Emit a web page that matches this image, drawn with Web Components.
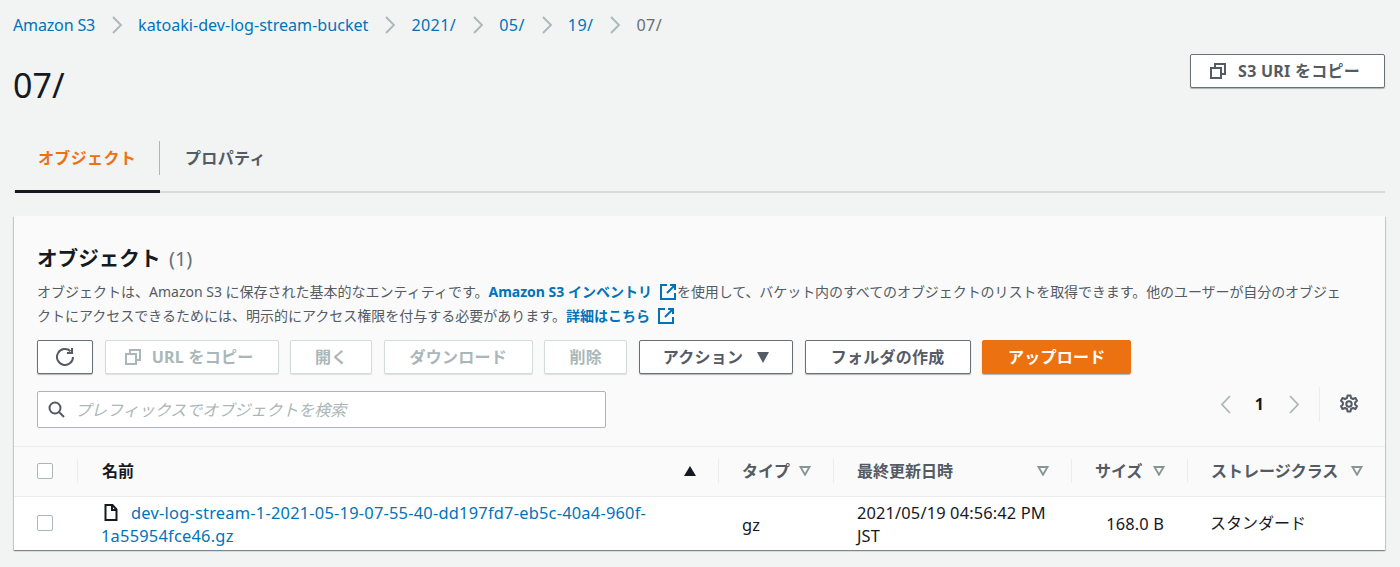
<!DOCTYPE html>
<html lang="ja"><head><meta charset="utf-8">
<style>
html,body{margin:0;padding:0;background:#f2f3f3;height:567px;overflow:hidden}
body{font-family:"Noto Sans","Noto Sans CJK JP",sans-serif;color:#16191f}
</style></head><body>
<s3-page></s3-page>
<script>
const FONT='"Noto Sans","Noto Sans CJK JP",sans-serif';
const copyIcon=`<svg width="16" height="16" viewBox="0 0 16 16" fill="none" stroke="currentColor" stroke-width="2"><rect x="1" y="5" width="10" height="10"/><path d="M5 4V1h10v10h-3"/></svg>`;
const extIcon=`<svg width="16" height="17" viewBox="0 0 16 17" fill="none" stroke="#0073bb" stroke-width="2"><path d="M7 2H1v14h14v-6"/><path d="M10 2h5v5M15 2L7 10"/></svg>`;
function def(name,html){customElements.define(name,class extends HTMLElement{constructor(){super();this.attachShadow({mode:'open'}).innerHTML=html;}})}
const chev=`<svg width="12" height="18" viewBox="0 0 12 18" fill="none" stroke="#aab7b8" stroke-width="1.8"><path d="M2 1l8 8-8 8"/></svg>`;

def('s3-btn',`<style>
:host{display:inline-flex;box-sizing:border-box;height:34px;align-items:center;justify-content:center;gap:14px;border:1px solid #687078;border-radius:2px;background:#fff;color:#545b64;font:700 16px/20px ${FONT};letter-spacing:.25px;white-space:nowrap;box-shadow:0 1px 1px rgba(0,28,36,.3)}
:host([disabled]){border-color:#d5dbdb;color:#aab7b8;box-shadow:0 1px 1px rgba(0,28,36,.12)}
:host([primary]){background:#ec7211;border-color:#ec7211;color:#fff}
:host([iconed]){padding-right:5px;gap:12px}
</style><slot></slot>`);

def('s3-crumbs',`<style>
:host{display:flex;align-items:center;height:20px;font:400 16.1px/20px ${FONT};color:#0073bb;white-space:nowrap}
svg{margin:0 15px 0 16px;flex:none}
span{color:#687078}
.d{letter-spacing:.4px}
.am{letter-spacing:-.2px}
</style>
<div class="am">Amazon S3</div>${chev}<div>katoaki-dev-log-stream-bucket</div>${chev}<div class="d">2021/</div>${chev}<div class="d">05/</div>${chev}<div class="d">19/</div>${chev}<span class="d">07/</span>`);

def('s3-tabs',`<style>
:host{display:flex;box-sizing:border-box;height:53px;margin:35px 15px 0 14px;border-bottom:2px solid #d5dbdb;font:700 16px/20px ${FONT};letter-spacing:.35px}
.t{box-sizing:border-box;height:53px;padding-top:8px}
.a{width:145px;margin-left:1px;padding-left:23px;color:#ec7211;border-bottom:3px solid #16191f;position:relative}
.a::after{content:"";position:absolute;right:0;top:1px;height:34px;width:1px;background:#aab7b8}
.b{padding-left:25px;color:#545b64}
</style><div class="t a">オブジェクト</div><div class="t b">プロパティ</div>`);

def('s3-check',`<style>:host{display:block;box-sizing:border-box;width:16px;height:16px;background:#fff;border:1px solid #aab7b8;border-radius:2px}</style>`);

def('s3-th',`<style>
:host{display:flex;align-items:center;box-sizing:border-box;height:24px;border-left:1px solid #eaeded;color:#545b64;font:700 16px/24px ${FONT};white-space:nowrap;padding-left:23px;padding-right:22px}
:host([strong]){color:#16191f;padding-left:24px}
.l{flex:1}
svg{flex:none;display:block}
</style><div class="l"><slot></slot></div><slot name="i"><svg width="12" height="10" viewBox="0 0 12 10" fill="none" stroke="#879596" stroke-width="1.8"><path d="M1.500 1h9L6 8.800z"/></svg></slot>`);

def('s3-page',`<style>
:host{display:block;height:567px;overflow:hidden}
.top{display:flex;justify-content:space-between;padding:0 15px 0 13px}
h1{margin:0;font:400 34px/40px ${FONT};color:#16191f;padding-top:30px}
.copy{width:195px;margin-top:19px}
s3-crumbs{margin:15px 0 0 13px}
.card{margin:23px 15px 0 14px;box-sizing:border-box;height:334px;background:#fff;box-shadow:0 1px 1px 0 rgba(0,28,36,.3),1px 1px 1px 0 rgba(0,28,36,.15),-1px 1px 1px 0 rgba(0,28,36,.15)}
.hd{box-sizing:border-box;height:231px;background:#fafafa;border-bottom:1px solid #eaeded;padding:27px 0 0 23px}
h2{margin:0;font:700 20.6px/30px ${FONT};color:#16191f}
h2 span{font-weight:400;color:#687078;font-size:20px;margin-left:3px}
.desc{margin:6px 0 0;font:400 14px/24px ${FONT};color:#545b64;white-space:nowrap}
.desc a{color:#0073bb;font-weight:700;display:inline}
.desc svg{vertical-align:-3px;margin:0 1px 0 8px}
.desc .rest{letter-spacing:-.08px}
.bar{display:flex;gap:11.6px;margin-top:12px}
.row2{display:flex;justify-content:space-between;margin-top:17px;padding-right:21px}
.search{box-sizing:border-box;width:569px;height:37px;background:#fff;border:1px solid #aab7b8;border-radius:2px;display:flex;align-items:center;gap:10px;padding-left:10px;color:#aab7b8;font:italic 400 16px/20px ${FONT}}
.pager{display:flex;align-items:center;height:32px;margin-top:-3px;color:#16191f;font:700 16px/20px ${FONT}}
.pager .n{margin:0 24px 0 23px}
.pager .g{margin-left:19px;border-left:1px solid #eaeded;height:35px;padding:0 5px 0 19px;display:flex;align-items:center}
.grid{display:grid;grid-template-columns:63px 641px 115px 238px 116px 1fr}
.th{box-sizing:border-box;height:50px;padding-bottom:1px;border-bottom:1px solid #eaeded;background:#fafafa;align-items:center}
.c0{padding-left:23px;display:flex;align-items:center}
.r{box-sizing:border-box;height:53px;padding-top:1px;align-items:center;font:400 16.4px/23px ${FONT};color:#16191f}
.r .c0,.r .size,.r .std{margin-top:-2px}
.name{color:#0073bb;padding:0 0 0 24px;line-height:23px;letter-spacing:.23px;white-space:nowrap}
.name svg{vertical-align:-2px;margin:0 13px 0 3px}
.cell{padding-left:24px;letter-spacing:.15px}
.size{text-align:right;padding-right:23px}
.std{font-size:16px;letter-spacing:0;padding-left:23px}
</style>
<s3-crumbs></s3-crumbs>
<div class="top"><h1>07/</h1><s3-btn class="copy" iconed>${copyIcon}<span>S3 URI をコピー</span></s3-btn></div>
<s3-tabs></s3-tabs>
<section class="card">
<div class="hd">
<h2>オブジェクト <span>(1)</span></h2>
<p class="desc">オブジェクトは、Amazon S3 に保存された基本的なエンティティです。<a>Amazon S3 インベントリ</a>${extIcon}<span class="rest">を使用して、バケット内のすべてのオブジェクトのリストを取得できます。他のユーザーが自分のオブジェ</span><br>クトにアクセスできるためには、明示的にアクセス権限を付与する必要があります。<a>詳細はこちら</a>${extIcon}</p>
<div class="bar">
<s3-btn style="width:56px"><svg width="20" height="20" viewBox="0 0 20 20" fill="none" stroke="currentColor" stroke-width="2"><path d="M15.500 4.200A8 8 0 1 0 18 10"/><path d="M17 1v5h-5" /></svg></s3-btn>
<s3-btn disabled iconed style="width:174px;gap:11px">${copyIcon}<span>URL をコピー</span></s3-btn>
<s3-btn disabled style="width:82px">開く</s3-btn>
<s3-btn disabled style="width:149px">ダウンロード</s3-btn>
<s3-btn disabled style="width:83px">削除</s3-btn>
<s3-btn style="width:154px"><span>アクション</span><svg width="12" height="11" viewBox="0 0 12 11" fill="currentColor"><path d="M0 0h12L6 11z"/></svg></s3-btn>
<s3-btn style="width:166px">フォルダの作成</s3-btn>
<s3-btn primary style="width:149px">アップロード</s3-btn>
</div>
<div class="row2">
<div class="search"><svg width="17" height="17" viewBox="0 0 17 17" fill="none" stroke="#545b64" stroke-width="2"><circle cx="7" cy="7" r="5.500"/><path d="M11 11l5 5"/></svg><span>プレフィックスでオブジェクトを検索</span></div>
<div class="pager"><svg width="12" height="19" viewBox="0 0 12 19" fill="none" stroke="#aab7b8" stroke-width="1.8"><path d="M10 1L2 9.500l8 8.500"/></svg><span class="n">1</span><svg width="12" height="19" viewBox="0 0 12 19" fill="none" stroke="#aab7b8" stroke-width="1.8"><path d="M2 1l8 8.500-8 8.500"/></svg>
<div class="g"><svg width="20" height="20" viewBox="0 0 20 20" fill="none" stroke="#545b64" stroke-width="2"><path d="M8.500 1.500h3l.5 2.500 2 1 2.500-1 1.500 2.700-1.900 1.700v2.200l1.900 1.700-1.500 2.700-2.500-1-2 1-.5 2.500h-3l-.5-2.500-2-1-2.500 1-1.500-2.700 1.900-1.700V8.400L2 6.700l1.500-2.700 2.500 1 2-1z" stroke-linejoin="round"/><circle cx="10" cy="10" r="2.700"/></svg></div></div>
</div>
</div>
<div class="grid th">
<div class="c0"><s3-check></s3-check></div>
<s3-th strong>名前<svg slot="i" width="12" height="10" viewBox="0 0 12 10" fill="#16191f"><path d="M6 0l6 10H0z"/></svg></s3-th>
<s3-th>タイプ</s3-th><s3-th>最終更新日時</s3-th><s3-th>サイズ</s3-th><s3-th>ストレージクラス</s3-th>
</div>
<div class="grid r">
<div class="c0"><s3-check></s3-check></div>
<div class="name"><svg width="14" height="17" viewBox="0 0 14 17" fill="none" stroke="#16191f" stroke-width="2"><path d="M1.500 1h7l4 4.500V16h-11z"/><path d="M8 1v5h5"/></svg>dev-log-stream-1-2021-05-19-07-55-40-dd197fd7-eb5c-40a4-960f-<br>1a55954fce46.gz</div>
<div class="cell">gz</div>
<div class="cell">2021/05/19 04:56:42 PM<br>JST</div>
<div class="cell size">168.0 B</div>
<div class="cell std">スタンダード</div>
</div>
</section>`);
</script>
</body></html>
